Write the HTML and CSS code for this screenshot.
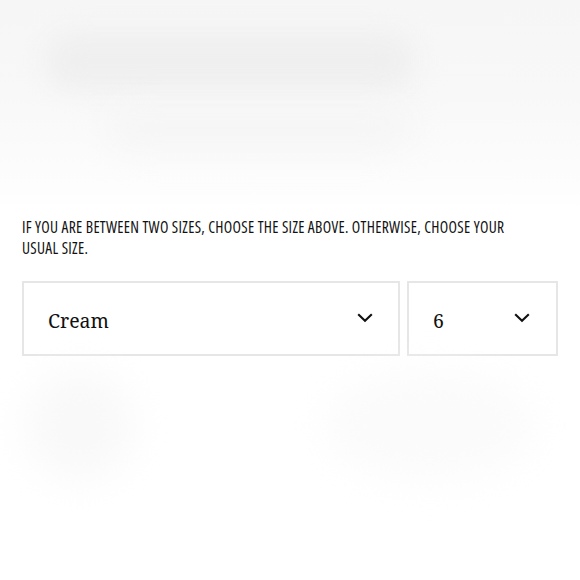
FILE: index.html
```html
<!DOCTYPE html>
<html>
<head>
<meta charset="utf-8">
<link rel="stylesheet" href="styles.css">
</head>
<body>
<div class="hero">
  <div class="blob"></div>
  <div class="blob2"></div>
</div>
<div class="content">
  <p class="note">If you are between two sizes, choose the size above. Otherwise, choose your usual size.</p>
  <div class="selects">
    <div class="select color">
      <span class="value">Cream</span>
      <svg class="chev" width="16" height="10" viewBox="0 0 16 10"><path d="M1.2 1.2 L8 7.8 L14.8 1.2" fill="none" stroke="#111" stroke-width="2.1"/></svg>
    </div>
    <div class="select size">
      <span class="value">6</span>
      <svg class="chev" width="16" height="10" viewBox="0 0 16 10"><path d="M1.2 1.2 L8 7.8 L14.8 1.2" fill="none" stroke="#111" stroke-width="2.1"/></svg>
    </div>
  </div>
</div>
<div class="footer">
  <div class="fblob a"></div>
  <div class="fblob b"></div>
</div>
</body>
</html>
```
FILE: styles.css
```css
html, body { margin: 0; padding: 0; background: #fff; overflow: hidden; }
body { width: 580px; height: 580px; }
.hero {
  height: 210px;
  background: linear-gradient(#f6f6f6, #f8f8f8 45%, #fdfdfd 90%, #fff);
  overflow: hidden;
  padding-top: 32px;
  box-sizing: border-box;
}
.blob {
  margin-left: 45px;
  width: 370px;
  height: 58px;
  border-radius: 29px;
  background: #efefef;
  filter: blur(12px);
}
.blob2 {
  margin: 18px 0 0 110px;
  width: 300px;
  height: 40px;
  border-radius: 20px;
  background: #f5f5f5;
  filter: blur(16px);
}
.content { padding: 0 22px; }
.note {
  margin: 7px 0 0;
  max-width: 502px;
  font-family: "Open Sans", "DejaVu Sans Condensed", sans-serif;
  font-stretch: 75%;
  font-weight: 500;
  text-transform: uppercase;
  font-size: 15.5px;
  line-height: 21px;
  letter-spacing: 0.3px;
  color: #111;
}
.selects {
  display: flex;
  gap: 7px;
  margin-top: 22px;
}
.select {
  box-sizing: border-box;
  height: 75px;
  border: 2px solid #e6e6e6;
  display: flex;
  align-items: center;
  justify-content: space-between;
  font-family: "Noto Serif", "DejaVu Serif", serif;
  font-size: 19.5px;
  color: #111;
}
.select.color { width: 378px; padding: 0 25px 0 24px; }
.select.size { width: 151px; padding: 0 26px 0 24px; }
.value { margin-top: 4px; }
.chev { margin-top: -1px; }
.footer {
  display: flex;
  gap: 190px;
  padding: 15px 0 0 25px;
}
.fblob {
  background: #f9f9f9;
  border-radius: 50%;
  filter: blur(18px);
}
.fblob.a { width: 110px; height: 110px; }
.fblob.b { width: 210px; height: 110px; background: #fbfbfb; }
```
